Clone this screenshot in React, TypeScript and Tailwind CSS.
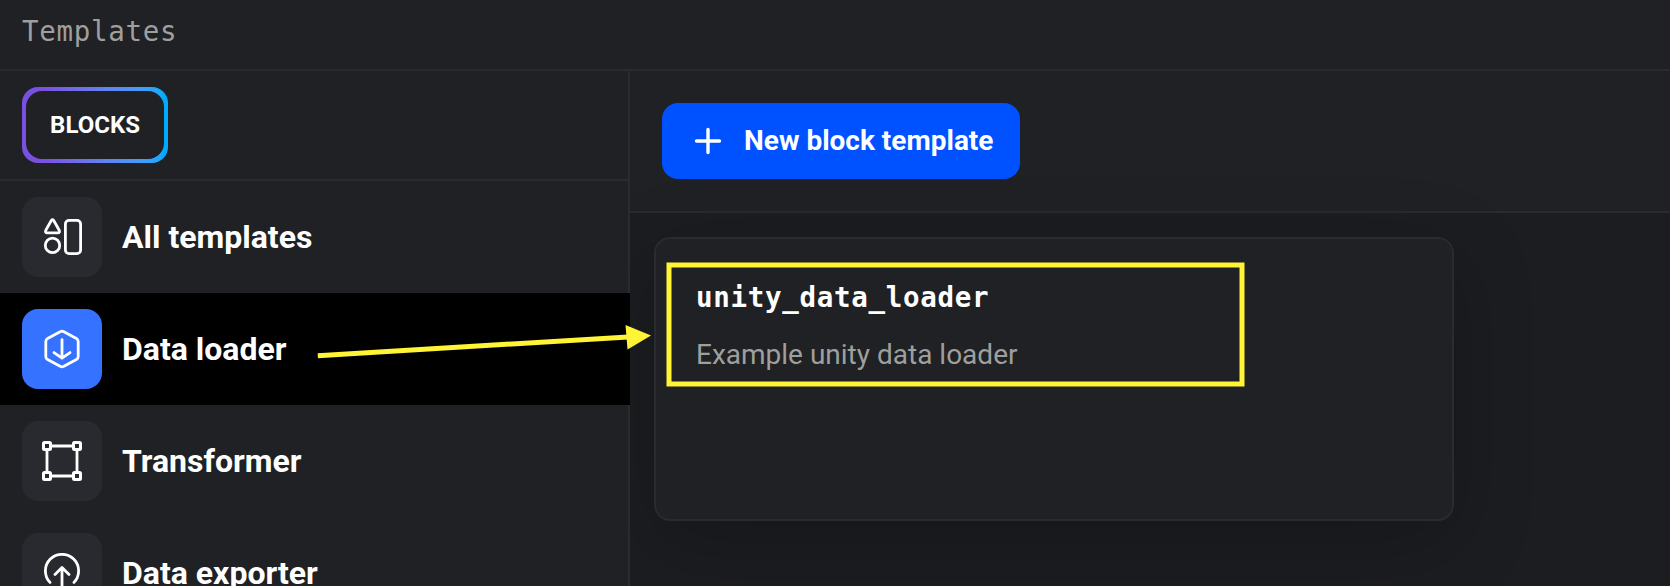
import type { ReactNode } from "react";

const stroke = {
  fill: "none",
  stroke: "#fff",
  strokeWidth: 2.8,
  strokeLinecap: "round" as const,
  strokeLinejoin: "round" as const,
};

function ShapesIcon() {
  return (
    <svg width="40" height="40" viewBox="0 0 40 40" {...stroke}>
      <path d="M9.3 3.5Q10.5 1.9 11.7 3.5L17.2 13.2Q18.2 15.7 16.2 15.8H4.8Q2.8 15.7 3.8 13.2Z" />
      <circle cx="10.5" cy="28.4" r="7.2" />
      <rect x="23.4" y="3.4" width="15.2" height="33.2" rx="3.6" />
    </svg>
  );
}

function LoaderIcon() {
  return (
    <svg width="40" height="40" viewBox="0 0 40 40" {...stroke}>
      <path d="M18.6 2.6Q20 1.8 21.4 2.6L34.4 9.4Q36.2 10.6 36.2 12.6V27.4Q36.2 29.4 34.4 30.6L21.4 37.4Q20 38.2 18.6 37.4L5.6 30.6Q3.8 29.4 3.8 27.4V12.6Q3.8 10.6 5.6 9.4Z" />
      <path d="M20 10.6V29M12 23.6L20 29.2L28 23.6" />
    </svg>
  );
}

function FrameIcon() {
  return (
    <svg width="40" height="40" viewBox="0 0 40 40" {...stroke}>
      <path d="M10 5H30M10 35H30M5 10V30M35 10V30" />
      <g strokeWidth="3">
        <rect x="1.5" y="1.5" width="7" height="7" rx="1" />
        <rect x="31.5" y="1.5" width="7" height="7" rx="1" />
        <rect x="1.5" y="31.5" width="7" height="7" rx="1" />
        <rect x="31.5" y="31.5" width="7" height="7" rx="1" />
      </g>
    </svg>
  );
}

function ExporterIcon() {
  return (
    <svg width="40" height="40" viewBox="0 0 40 40" {...stroke}>
      <path d="M8 29.4A16.6 16.6 0 1 1 32 29.4" />
      <path d="M20 38V14.6M13 21.6L20 14.6L27 21.6" />
    </svg>
  );
}

function NavItem({ icon, label, active = false }: { icon: ReactNode; label: string; active?: boolean }) {
  return (
    <div className={`flex h-28 shrink-0 items-center gap-5 pl-[22px] ${active ? "bg-black" : ""}`}>
      <div className={`flex size-20 items-center justify-center rounded-2xl ${active ? "bg-[#3572ff]" : "bg-[#292a2f]"}`}>
        {icon}
      </div>
      <span className="text-[32px] leading-10 font-bold whitespace-nowrap">{label}</span>
    </div>
  );
}

export default function App() {
  return (
    <div className="relative flex h-[586px] w-[1670px] flex-col overflow-hidden bg-[#202124] font-['Roboto',sans-serif] text-white">
      <header className="flex h-[71px] shrink-0 items-start border-b-2 border-[#2a2b2f] pt-[11px] pl-[22px]">
        <h1 className="font-['DejaVu_Sans_Mono',monospace] text-[27.5px] leading-10 tracking-[0.7px] text-[#9f9f9e]">Templates</h1>
      </header>
      <div className="flex min-h-0 flex-1">
        <aside className="relative z-10 flex w-[630px] shrink-0 flex-col bg-[#202124]">
          <div className="flex h-[110px] shrink-0 items-center border-b-2 border-[#2a2b2f] pl-[22px]">
            <div className="h-[76px] w-[146px] rounded-2xl bg-linear-to-r from-[#7a50e2] from-15% to-[#00abff] to-97% p-1">
              <div className="flex h-full items-center justify-center rounded-2xl bg-[#202124] text-2xl font-bold">BLOCKS</div>
            </div>
          </div>
          <nav className="flex flex-col">
            <NavItem icon={<ShapesIcon />} label="All templates" />
            <NavItem icon={<LoaderIcon />} label="Data loader" active />
            <NavItem icon={<FrameIcon />} label="Transformer" />
            <NavItem icon={<ExporterIcon />} label="Data exporter" />
          </nav>
          <div className="absolute top-0 right-0 h-[222px] w-0.5 bg-[#2a2b2f]" />
          <div className="absolute top-[334px] right-0 bottom-0 w-0.5 bg-[#2a2b2f]" />
        </aside>
        <main className="flex min-w-0 flex-1 flex-col bg-[#1c1d20]">
          <div className="flex h-[142px] shrink-0 items-center border-b-2 border-[#2a2b2f] bg-[#202124] pl-8">
            <button className="flex h-[76px] w-[358px] items-center rounded-2xl bg-[#0051ff] pl-8">
              <svg width="28" height="28" viewBox="0 0 28 28" fill="none" stroke="#fff" strokeWidth="3.4" strokeLinecap="round">
                <path d="M14 2.5V25.5M2.5 14H25.5" />
              </svg>
              <span className="ml-[22px] text-[28px] font-bold whitespace-nowrap">New block template</span>
            </button>
          </div>
          <div className="px-6 pt-6">
            <section className="h-[284px] w-[800px] rounded-2xl border-2 border-[#2a2b2f] bg-[#202124] px-10 pt-[38px] shadow-[0_20px_80px_rgba(0,0,0,0.22)]">
              <h2 className="font-['DejaVu_Sans_Mono',monospace] text-[27.5px] leading-10 font-bold tracking-[0.7px]">unity_data_loader</h2>
              <p className="mt-[18px] text-[28px] leading-10 text-[#9f9f9e]">Example unity data loader</p>
            </section>
          </div>
        </main>
      </div>
      <svg className="pointer-events-none absolute inset-0 z-20" width="1670" height="586" fill="none">
        <path d="M669 265H1242V384H669Z" stroke="#fff435" strokeWidth="5" />
        <path d="M317.8 355.7L628 337" stroke="#fff435" strokeWidth="5" />
        <path d="M625.5 325L651 335.5L627.5 349.5Z" fill="#fff435" />
      </svg>
    </div>
  );
}
